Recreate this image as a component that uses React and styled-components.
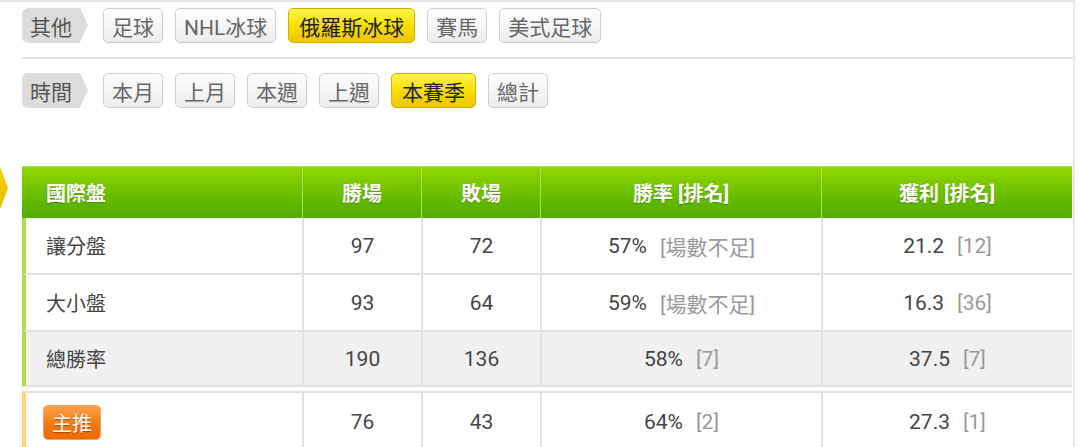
import React from 'react'
import styled, { createGlobalStyle, css } from 'styled-components'

const Global = createGlobalStyle`
body {
  margin: 0;
  background: #fff;
  font-family: Roboto, "Noto Sans CJK TC", sans-serif;
}
`
const Page = styled.div`
position: relative;
width: 1051px;
height: 447px;
padding-left: 22px;
border-top: 2px solid #e6e6e6;
border-right: 2px solid #e8e8e8;
overflow: hidden;
`
const Marker = styled.div`
position: absolute;
left: -34px;
top: 158px;
width: 42px;
height: 56px;
background: linear-gradient(#f8d800, #e8b800);
clip-path: polygon(25% 0, 75% 0, 100% 50%, 75% 100%, 25% 100%, 0 50%);
`
const FilterRow = styled.div`
display: flex;
align-items: center;
height: 35px;
padding: ${p => p.$pad};
`
const Divider = styled.div`
height: 2px;
background: #e2e2e2;
`
const Label = styled.div`
position: relative;
display: flex;
align-items: center;
height: 35px;
width: 58px;
padding-left: 8px;
box-sizing: border-box;
margin-right: 23px;
background: #dcdcdc;
border-radius: 6px 0 0 6px;
color: #555;
font-size: 21px;
&::after {
  content: '';
  position: absolute;
  right: -8px;
  top: 0;
  border-top: 17.5px solid transparent;
  border-bottom: 17.5px solid transparent;
  border-left: 8px solid #dcdcdc;
}
`
const Btn = styled.div`
height: 35px;
box-sizing: border-box;
padding: 0 8px;
margin-right: 12px;
display: flex;
align-items: center;
border: 1px solid #cfcfcf;
border-radius: 5px;
background: linear-gradient(#ffffff, #ececec);
color: #666;
font-size: 21px;
${p => p.$on && css`
  padding: 0 10px;
  background: linear-gradient(#fff54a, #f8dc00 55%, #ecc600);
  border-color: #d4b000;
  color: #222;
`}
`
const Table = styled.div`
margin-top: 58px;
width: 1050px;
display: grid;
grid-template-columns: 280px 119px 119px 281px 251px;
`
const Head = styled.div`
height: 51px;
display: flex;
align-items: center;
justify-content: ${p => (p.$left ? 'flex-start' : 'center')};
padding-left: ${p => (p.$left ? '24px' : '0')};
background: linear-gradient(#92d900, #6cc000 50%, #52ab00);
border-left: ${p => (p.$left ? 'none' : '1px solid #a6e25a')};
border-top: 1px solid #a6e25a;
color: #fff;
font-weight: bold;
font-size: 20px;
text-shadow: 0 1px 1px rgba(0, 0, 0, 0.25);
`
const Cell = styled.div`
height: ${p => p.$h}px;
box-sizing: border-box;
display: flex;
align-items: center;
justify-content: ${p => (p.$left ? 'flex-start' : 'center')};
padding-left: ${p => (p.$left ? '20px' : '0')};
background: ${p => (p.$gray ? '#f0f0f0' : '#fff')};
border-left: ${p => (p.$stripe ? `4px solid ${p.$stripe}` : '2px solid #e2e2e2')};
border-bottom: 2px solid #e2e2e2;
border-top: ${p => (p.$topLine ? '2px solid #e2e2e2' : 'none')};
margin-top: ${p => (p.$topLine ? '4px' : '0')};
color: #444;
font-size: ${p => (p.$left ? '20px' : '21px')};
`
const Rank = styled.span`
color: #999;
margin-left: 13px;
`
const Badge = styled.div`
height: 33px;
margin-left: -3px;
padding: 0 8px;
display: flex;
align-items: center;
border: 1px solid #f3a561;
border-radius: 5px;
background: linear-gradient(#ffa14a, #f47a12 55%, #ee6a00);
color: #fff;
font-size: 20px;
text-shadow: 0 1px 1px rgba(120, 40, 0, 0.6);
`

const rows = [
  { name: '讓分盤', w: '97', l: '72', rate: '57%', rr: '[場數不足]', p: '21.2', pr: '[12]', stripe: '#a8df4a', h: 57 },
  { name: '大小盤', w: '93', l: '64', rate: '59%', rr: '[場數不足]', p: '16.3', pr: '[36]', stripe: '#a8df4a', h: 57 },
  { name: '總勝率', w: '190', l: '136', rate: '58%', rr: '[7]', p: '37.5', pr: '[7]', stripe: '#a8df4a', h: 55, gray: true },
  { badge: '主推', w: '76', l: '43', rate: '64%', rr: '[2]', p: '27.3', pr: '[1]', stripe: '#ffd27a', h: 62, top: true },
]

const App = () => {
  const sports = ['足球', 'NHL冰球', '俄羅斯冰球', '賽馬', '美式足球']
  const times = ['本月', '上月', '本週', '上週', '本賽季', '總計']
  return (
    <Page>
      <Global />
      <Marker />
      <FilterRow $pad="6px 0 14px">
        <Label>其他</Label>
        {sports.map(s => (
          <Btn key={s} $on={s === '俄羅斯冰球'}>{s}</Btn>
        ))}
      </FilterRow>
      <Divider />
      <FilterRow $pad="14px 0 0">
        <Label>時間</Label>
        {times.map(t => (
          <Btn key={t} $on={t === '本賽季'}>{t}</Btn>
        ))}
      </FilterRow>
      <Table>
        <Head $left>國際盤</Head>
        <Head>勝場</Head>
        <Head>敗場</Head>
        <Head>勝率 [排名]</Head>
        <Head>獲利 [排名]</Head>
        {rows.map((r, i) => (
          <React.Fragment key={i}>
            <Cell $left $stripe={r.stripe} $h={r.h} $gray={r.gray} $topLine={r.top}>
              {r.badge ? <Badge>{r.badge}</Badge> : r.name}
            </Cell>
            <Cell $h={r.h} $gray={r.gray} $topLine={r.top}>{r.w}</Cell>
            <Cell $h={r.h} $gray={r.gray} $topLine={r.top}>{r.l}</Cell>
            <Cell $h={r.h} $gray={r.gray} $topLine={r.top}>{r.rate}<Rank>{r.rr}</Rank></Cell>
            <Cell $h={r.h} $gray={r.gray} $topLine={r.top}>{r.p}<Rank>{r.pr}</Rank></Cell>
          </React.Fragment>
        ))}
      </Table>
    </Page>
  )
}

export default App
